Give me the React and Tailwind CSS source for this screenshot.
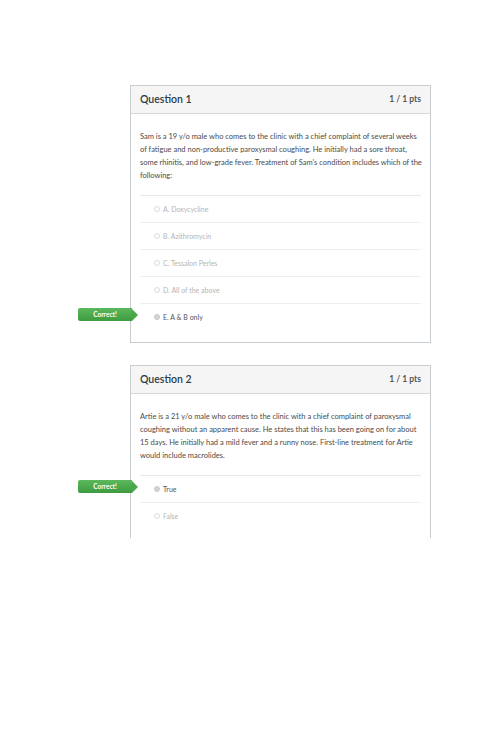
import React from 'react';

const font = { fontFamily: 'Lato, "Open Sans", sans-serif' };

function Badge() {
  return (
    <div className="absolute left-[-62px] top-[4px] flex items-center">
      <div className="w-[54px] h-[13px] bg-gradient-to-b from-[#5cb85c] to-[#3f9b3f] rounded-l-[2px] flex items-center justify-center text-white text-[6.5px] font-bold">
        Correct!
      </div>
      <div className="w-0 h-0 border-y-[6.5px] border-y-transparent border-l-[6px] border-l-[#4aa84a]" />
    </div>
  );
}

function Option({ label, selected, correct, first }) {
  return (
    <div className={`relative h-[27px] flex items-center border-t ${first ? 'border-[#e8e8e8]' : 'border-[#eeeeee]'}`}>
      {correct && <Badge />}
      <span
        className={`ml-[14px] w-[6px] h-[6px] rounded-full border ${
          selected ? 'border-[#c8c8c8] bg-[#d4d4d4]' : 'border-[#dcdcdc] bg-white'
        }`}
      />
      <span className={`ml-[3px] text-[7px] ${selected ? 'text-[#555]' : 'text-[#b5b5b5]'}`}>{label}</span>
    </div>
  );
}

function Card({ title, lines, options, pb }) {
  return (
    <div className="ml-[52px] w-[301px] border border-[#c7cdd1] bg-white">
      <div className="h-[28px] bg-[#f5f5f5] border-b border-[#d5d9dc] flex items-center justify-between px-[9px]">
        <span className="text-[10.5px] font-semibold text-[#2d3b45]">{title}</span>
        <span className="text-[8.5px] font-bold text-[#555]">1 / 1 pts</span>
      </div>
      <div className={`px-[9px] pt-[16px] ${pb}`}>
        <div className="text-[7.5px] leading-[13px] text-[#4a4a4a] mb-[13px]">
          {lines.map((l, i) => (
            <div key={i} className="whitespace-nowrap">{l}</div>
          ))}
        </div>
        {options.map((o, i) => (
          <Option key={i} {...o} first={i === 0} />
        ))}
      </div>
    </div>
  );
}

export default function App() {
  return (
    <div className="w-[500px] h-[750px] bg-white pt-[85px] pl-[78px]" style={font}>
      <Card
        title="Question 1"
        pb="pb-[12px]"
        lines={[
          'Sam is a 19 y/o male who comes to the clinic with a chief complaint of several weeks',
          'of fatigue and non-productive paroxysmal coughing. He initially had a sore throat,',
          "some rhinitis, and low-grade fever. Treatment of Sam's condition includes which of the",
          'following:',
        ]}
        options={[
          { label: 'A. Doxycycline' },
          { label: 'B. Azithromycin' },
          { label: 'C. Tessalon Perles' },
          { label: 'D. All of the above' },
          { label: 'E. A & B only', selected: true, correct: true },
        ]}
      />
      <div className="mt-[22px] h-[173px] overflow-hidden">
        <Card
          title="Question 2"
          pb="pb-[20px]"
          lines={[
            'Artie is a 21 y/o male who comes to the clinic with a chief complaint of paroxysmal',
            'coughing without an apparent cause. He states that this has been going on for about',
            '15 days. He initially had a mild fever and a runny nose. First-line treatment for Artie',
            'would include macrolides.',
          ]}
          options={[
            { label: 'True', selected: true, correct: true },
            { label: 'False' },
          ]}
        />
      </div>
    </div>
  );
}
